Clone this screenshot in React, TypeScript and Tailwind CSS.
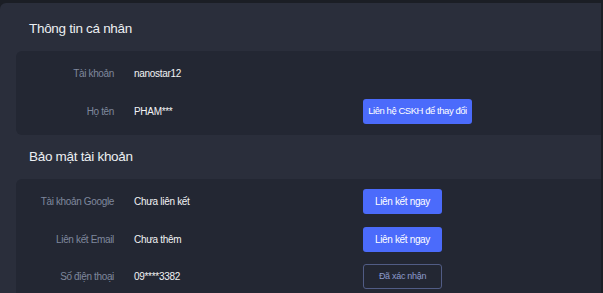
const font = { fontFamily: '"Liberation Sans", Arial, sans-serif' };

type Row = {
    label: string;
    value: string;
    action?: { text: string; variant: 'primary' | 'outline'; width: string; size?: string };
};

const personal: Row[] = [
    { label: 'Tài khoản', value: 'nanostar12' },
    {
        label: 'Họ tên',
        value: 'PHAM***',
        action: {
            text: 'Liên hệ CSKH để thay đổi',
            variant: 'primary',
            width: 'w-[109px]',
            size: 'text-[9.5px] tracking-[-0.45px]',
        },
    },
];

const security: Row[] = [
    {
        label: 'Tài khoản Google',
        value: 'Chưa liên kết',
        action: { text: 'Liên kết ngay', variant: 'primary', width: 'w-[79px]' },
    },
    {
        label: 'Liên kết Email',
        value: 'Chưa thêm',
        action: { text: 'Liên kết ngay', variant: 'primary', width: 'w-[79px]' },
    },
    {
        label: 'Số điện thoại',
        value: '09****3382',
        action: { text: 'Đã xác nhận', variant: 'outline', width: 'w-[79px]' },
    },
];

function InfoRow({ row }: { row: Row }) {
    return (
        <div className="flex items-center h-[25px]">
            <span className="w-[98px] text-right text-[10px] tracking-[-0.35px] text-[#7f889d]">{row.label}</span>
            <span className="ml-[20px] w-[229px] text-[10px] tracking-[-0.3px] text-[#f2f3f5]">{row.value}</span>
            {row.action && (
                <button
                    className={`h-[25px] ${row.action.width} rounded-[3px] whitespace-nowrap ${row.action.variant === 'primary'
                        ? `bg-[#4b6bfb] text-white ${row.action.size ?? 'text-[10px] tracking-[-0.35px]'}`
                        : 'border border-[#515c85] text-[#8d9bcc] text-[9px] tracking-[-0.3px]'
                        }`}
                >
                    {row.action.text}
                </button>
            )}
        </div>
    );
}

function Section({ title, rows, gapTop }: { title: string; rows: Row[]; gapTop: string }) {
    return (
        <div className={gapTop}>
            {/* Section heading */}
            <div className="pl-[13px] leading-[20px] text-[13.5px] tracking-[-0.3px] text-[#eceef2]">
                {title}
            </div>
            {/* Rows card */}
            <div className="mt-[12px] bg-[#232733] rounded-l-[6px] pt-[10px] pb-[11px] flex flex-col gap-[12.5px]">
                {rows.map((r) => (
                    <InfoRow key={r.label} row={r} />
                ))}
            </div>
        </div>
    );
}

export default function App() {
    return (
        <div className="w-[603px] h-[293px] overflow-hidden bg-[#1b1e25] pt-[3px]" style={font}>
            <div className="h-full bg-[#2a2e3b] rounded-tl-[6px] pl-[16px] mr-[2px]">
                <Section title="Thông tin cá nhân" rows={personal} gapTop="pt-[16px]" />
                <Section title="Bảo mật tài khoản" rows={security} gapTop="pt-[12.5px]" />
            </div>
        </div>
    );
}
